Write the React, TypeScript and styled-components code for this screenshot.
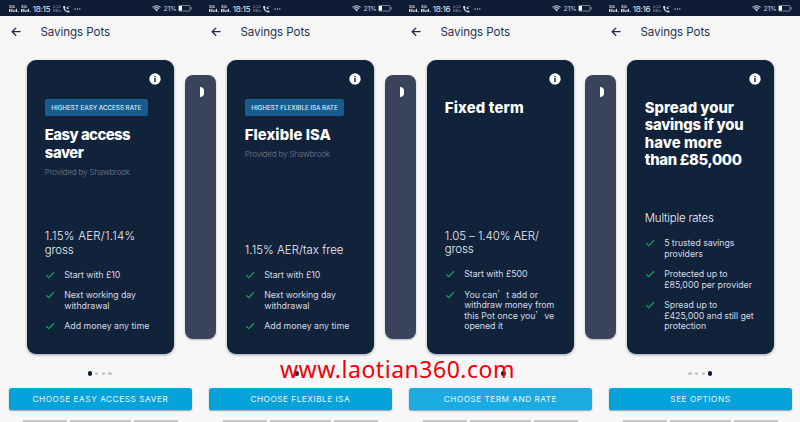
import React from "react";
import styled, { createGlobalStyle } from "styled-components";

const GlobalStyle = createGlobalStyle`
  * { box-sizing: border-box; }
  html, body { margin: 0; padding: 0; overflow: hidden; background: #f7f7f7; }
  body { font-family: Inter, "Liberation Sans", sans-serif; }
`;

const Board = styled.main`
  position: relative;
  display: grid;
  grid-template-columns: repeat(4, 200px);
  width: 800px;
  height: 422px;
  overflow: hidden;
  background: #f7f7f7;
`;

const Phone = styled.section`
  display: flex;
  flex-direction: column;
  width: 200px;
  height: 422px;
  overflow: hidden;
`;

const StatusBar = styled.header`
  display: flex;
  align-items: center;
  flex: none;
  height: 16px;
  padding: 1px 8px 0 9px;
  background: #0e1b35;
  color: #e4e7ee;
`;

const Signal = styled.span`
  display: flex;
  width: 12px;
  margin-right: -0.2px;
`;

const Clock = styled.span`
  width: 19px;
  font-size: 8.2px;
  letter-spacing: -0.3px;
  line-height: 10px;
  white-space: nowrap;
`;

const NetSpeed = styled.span`
  display: flex;
  width: 10px;
  margin-left: 1px;
`;

const StatusIcon = styled.span<{ $gap: number }>`
  display: flex;
  margin-left: ${(p) => p.$gap}px;
`;

const Battery = styled.span`
  margin-left: 3px;
  width: 13px;
  font-size: 6.8px;
  letter-spacing: -0.2px;
  line-height: 10px;
  color: #c9cedb;
`;

const Spacer = styled.span`
  flex: 1;
`;

const TitleBar = styled.div`
  display: flex;
  align-items: center;
  flex: none;
  height: 32px;
  padding-left: 11px;
`;

const ScreenTitle = styled.h1`
  margin: 0 0 0 19.5px;
  font-size: 11.6px;
  font-weight: 400;
  letter-spacing: -0.08px;
  line-height: 16px;
  color: #26314f;
  white-space: nowrap;
`;

const Carousel = styled.div`
  display: grid;
  grid-template-columns: 15.5px 146.8px 14.5px;
  column-gap: 11.5px;
  flex: none;
  height: 293.2px;
  margin-top: 12.4px;
`;

const Peek = styled.div<{ $side: "left" | "right"; $empty?: boolean }>`
  height: 264px;
  margin-top: 15px;
  padding-top: 11.3px;
  overflow: hidden;
  border-radius: ${(p) => (p.$side === "left" ? "0 8px 8px 0" : "8px 0 0 8px")};
  background: ${(p) => (p.$empty ? "transparent" : "#39435b")};
  box-shadow: ${(p) => (p.$empty ? "none" : "0 1px 2px rgba(20, 30, 50, 0.3)")};
`;

const HalfInfo = styled.span`
  display: block;
  width: 4px;
  height: 10px;
  border-radius: 0 5px 5px 0;
  background: #fff;
`;

const Card = styled.article`
  display: flex;
  flex-direction: column;
  padding: 12.4px 12.5px 21.5px 17.8px;
  border-radius: 9px;
  background: #11223b;
  box-shadow: 0 1px 3px rgba(10, 20, 40, 0.4);
`;

const InfoRow = styled.div`
  display: flex;
  justify-content: flex-end;
  height: 26px;
`;

const Badge = styled.span<{ $width: number; $tracking: number }>`
  display: flex;
  align-items: center;
  width: ${(p) => p.$width}px;
  height: 17.6px;
  margin-bottom: 9.6px;
  padding-left: 6.5px;
  border-radius: 2px;
  background: #185d90;
  color: #d9e8f3;
  font-size: 6.3px;
  font-weight: 500;
  letter-spacing: ${(p) => p.$tracking}px;
  white-space: nowrap;
`;

const ProductName = styled.h2`
  margin: 1.2px 0 0;
  font-size: 14.8px;
  font-weight: 800;
  line-height: 17.4px;
  color: #fff;
`;

const Line = styled.span<{ $tracking?: number }>`
  display: block;
  letter-spacing: ${(p) => p.$tracking ?? 0}px;
  white-space: pre;
`;

const Provider = styled.p`
  margin: 3.6px 0 0;
  font-size: 8.2px;
  font-weight: 300;
  letter-spacing: -0.26px;
  line-height: 13px;
  color: #727b92;
`;

const Rate = styled.div`
  margin: auto 0 12.9px;
  font-size: 11.4px;
  font-weight: 300;
  line-height: 13.4px;
  color: #eef1f6;
`;

const Features = styled.ul`
  display: flex;
  flex-direction: column;
  gap: 9.9px;
  margin: 0;
  padding: 0;
  list-style: none;
`;

const Feature = styled.li`
  display: grid;
  grid-template-columns: 19.4px 1fr;
  font-size: 8.8px;
  font-weight: 400;
  line-height: 10.6px;
  color: #d5dae3;
`;

const WideMark = styled.span`
  font-family: "Noto Sans CJK SC", sans-serif;
  line-height: 1;
`;

const Dots = styled.div`
  display: flex;
  align-items: center;
  justify-content: center;
  flex: none;
  height: 6px;
  margin-top: 16.8px;
`;

const Dot = styled.span<{ $active: boolean; $faint: boolean }>`
  display: flex;
  width: 6.65px;
  justify-content: center;
  &::before {
    content: "";
    width: ${(p) => (p.$active ? 4.6 : 3.4)}px;
    height: ${(p) => (p.$active ? 4.6 : 3.4)}px;
    border-radius: 50%;
    background: ${(p) => (p.$active ? "#0c1a36" : p.$faint ? "transparent" : "#c4c6cb")};
  }
`;

const Action = styled.button<{ $pressed?: boolean; $tracking: number }>`
  flex: none;
  width: 182.4px;
  height: 22.5px;
  margin: 11.3px 0 0 9.2px;
  padding: 0;
  border: 0;
  border-radius: 2.5px;
  background: ${(p) => (p.$pressed ? "#1cabe0" : "#06a3db")};
  box-shadow: 0 1px 1.5px rgba(30, 50, 70, 0.45);
  color: #e9f7fd;
  font-family: Inter, sans-serif;
  font-size: 8.2px;
  font-weight: 400;
  letter-spacing: ${(p) => p.$tracking}px;
  line-height: 22.5px;
  text-align: center;
  white-space: nowrap;
`;

const KeyRow = styled.div`
  display: flex;
  gap: 3px;
  margin-top: 10.2px;
  padding: 0 22px 0 23px;
`;

const KeyEdge = styled.span<{ $grow: number }>`
  flex: ${(p) => p.$grow};
  height: 2px;
  background: #c6c6c6;
`;

const Watermark = styled.div`
  position: absolute;
  left: 280px;
  top: 353px;
  font-family: "Noto Sans", sans-serif;
  font-size: 23px;
  letter-spacing: 0.52px;
  line-height: 32px;
  color: #f00008;
  white-space: nowrap;
`;

const SignalIcon = ({ label }: { label: string }) => (
  <svg width="12" height="9" viewBox="0 0 12 9" fill="#d5d9e3">
    <text x="0" y="4" fontSize="4.4" fontWeight="700" fontFamily="Liberation Sans">{label}</text>
    <path d="M0 5h1.5v3H0zM2.3 4.8h1.2V8H2.3zM4 6.4h1V8H4zM5.5 5.6h1V8h-1zM7 4.8h1V8H7zM8.7 7h.7v1h-.7z" />
  </svg>
);

const CheckIcon = () => (
  <svg width="10" height="10" viewBox="0 0 10 10" fill="none" stroke="#12a05b" strokeWidth="1.3">
    <path d="M1.3 5.3 3.7 7.6 9 2.3" />
  </svg>
);

const InfoIcon = () => (
  <svg width="12" height="12" viewBox="0 0 12 12">
    <circle cx="6" cy="6" r="5.7" fill="#fff" />
    <path d="M5.3 2.9h1.4v1.3H5.3zM5.3 5.1h1.4v4H5.3z" fill="#11223b" />
  </svg>
);

const BackIcon = () => (
  <svg width="10" height="10" viewBox="0 0 10 10" fill="none" stroke="#1b2747" strokeWidth="1.25">
    <path d="M9.6 4.7H1.3M5.2.6 1.1 4.7l4.1 4.1" />
  </svg>
);

type TextLine = { text: React.ReactNode; tracking?: number };

type Product = {
  time: string;
  badge?: { text: string; width: number; tracking: number };
  name: TextLine[];
  provider?: string;
  rate: TextLine[];
  features: TextLine[][];
  action: { text: string; tracking: number; pressed?: boolean };
  faintDots?: boolean;
};

const accessFeatures: TextLine[][] = [
  [{ text: "Start with £10", tracking: -0.04 }],
  [{ text: "Next working day", tracking: -0.07 }, { text: "withdrawal" }],
  [{ text: "Add money any time" }],
];

const products: Product[] = [
  {
    time: "18:15",
    badge: { text: "HIGHEST EASY ACCESS RATE", width: 103, tracking: -0.03 },
    name: [{ text: "Easy access", tracking: -0.5 }, { text: "saver", tracking: -0.4 }],
    provider: "Provided by Shawbrook",
    rate: [{ text: "1.15% AER/1.14%", tracking: 0.27 }, { text: "gross", tracking: -0.1 }],
    features: accessFeatures,
    action: { text: "CHOOSE EASY ACCESS SAVER", tracking: 0.57 },
  },
  {
    time: "18:15",
    badge: { text: "HIGHEST FLEXIBLE ISA RATE", width: 99.5, tracking: -0.05 },
    name: [{ text: "Flexible ISA", tracking: 0.08 }],
    provider: "Provided by Shawbrook",
    rate: [{ text: "1.15% AER/tax free", tracking: 0.07 }],
    features: accessFeatures,
    action: { text: "CHOOSE FLEXIBLE ISA", tracking: 0.54 },
    faintDots: true,
  },
  {
    time: "18:16",
    name: [{ text: "Fixed term", tracking: 0.18 }],
    rate: [{ text: "1.05 – 1.40% AER/", tracking: -0.03 }, { text: "gross", tracking: -0.1 }],
    features: [
      [{ text: "Start with £500", tracking: -0.04 }],
      [
        { text: <>You can<WideMark>’</WideMark>t add or</>, tracking: -0.04 },
        { text: "withdraw money from", tracking: -0.03 },
        { text: <>this Pot once you<WideMark>’</WideMark>ve</>, tracking: -0.04 },
        { text: "opened it", tracking: -0.04 },
      ],
    ],
    action: { text: "CHOOSE TERM AND RATE", tracking: 0.52, pressed: true },
    faintDots: true,
  },
  {
    time: "18:16",
    name: [
      { text: "Spread your", tracking: 0.02 },
      { text: "savings if you", tracking: -0.23 },
      { text: "have more", tracking: 0.08 },
      { text: "than £85,000", tracking: -0.32 },
    ],
    rate: [{ text: "Multiple rates", tracking: -0.18 }],
    features: [
      [{ text: "5 trusted savings", tracking: -0.07 }, { text: "providers", tracking: -0.06 }],
      [{ text: "Protected up to", tracking: -0.04 }, { text: "£85,000 per provider", tracking: -0.02 }],
      [
        { text: "Spread up to", tracking: -0.02 },
        { text: "£425,000 and still get", tracking: -0.06 },
        { text: "protection", tracking: -0.04 },
      ],
    ],
    action: { text: "SEE OPTIONS", tracking: 0.55 },
  },
];

const Lines = ({ lines }: { lines: TextLine[] }) => (
  <>
    {lines.map((l, i) => (
      <Line key={i} $tracking={l.tracking}>{l.text}</Line>
    ))}
  </>
);

const Status = ({ time }: { time: string }) => (
  <StatusBar>
    <Signal><SignalIcon label="5G" /></Signal>
    <Signal><SignalIcon label="3G" /></Signal>
    <Clock>{time}</Clock>
    <NetSpeed>
      <svg width="9" height="8" viewBox="0 0 9 8" fill="#9ca4b6" fontFamily="Liberation Sans" fontSize="3.9">
        <text x="0" y="3.3">0.10</text>
        <text x="0" y="7.4">KB/s</text>
      </svg>
    </NetSpeed>
    <StatusIcon $gap={0.5}>
      <svg width="7" height="8" viewBox="0 0 7 8" fill="none" stroke="#dfe3ec" strokeWidth="1.1">
        <path d="M.8 1C.8 4.7 2.8 6.9 6.2 7" />
        <path d="M.9 1.1 1.7 3M6.2 6.9 4.7 5.9" strokeWidth="1.5" />
        <path d="M6.2 1.2 4 3.5M4 2v1.6h1.7" strokeWidth=".8" />
      </svg>
    </StatusIcon>
    <StatusIcon $gap={4}>
      <svg width="7" height="2" viewBox="0 0 7 2" fill="#c9cedb">
        <circle cx="1" cy="1" r=".7" /><circle cx="3.4" cy="1" r=".7" /><circle cx="5.8" cy="1" r=".7" />
      </svg>
    </StatusIcon>
    <Spacer />
    <StatusIcon $gap={0}>
      <svg width="9" height="7" viewBox="0 0 9 7" fill="none" stroke="#b4bbca" strokeWidth="1.2">
        <path d="M.5 2.4C2.8.3 6.2.3 8.5 2.4M1.9 3.8c1.5-1.3 3.7-1.3 5.2 0" />
        <path d="M2.9 4.7 4.5 6.6l1.6-1.9c-.9-.8-2.3-.8-3.2 0z" fill="#c2c8d5" stroke="none" />
      </svg>
    </StatusIcon>
    <Battery>21%</Battery>
    <StatusIcon $gap={1.5}>
      <svg width="14" height="7" viewBox="0 0 14 7">
        <rect x=".5" y=".5" width="11.6" height="5.6" rx="1" fill="none" stroke="#8f98ab" strokeWidth=".8" />
        <rect x="1" y="1" width="3" height="4.6" fill="#fff" />
        <rect x="12.6" y="2.2" width="1" height="2.4" fill="#8f98ab" />
      </svg>
    </StatusIcon>
  </StatusBar>
);

export default function App() {
  return (
    <>
      <GlobalStyle />
      <Board>
        {products.map((p, index) => (
          <Phone key={index}>
            <Status time={p.time} />
            <TitleBar>
              <BackIcon />
              <ScreenTitle>Savings Pots</ScreenTitle>
            </TitleBar>
            <Carousel>
              <Peek $side="left" $empty={index === 0}>
                {index > 0 && <HalfInfo />}
              </Peek>
              <Card>
                <InfoRow><InfoIcon /></InfoRow>
                {p.badge && (
                  <Badge $width={p.badge.width} $tracking={p.badge.tracking}>{p.badge.text}</Badge>
                )}
                <ProductName><Lines lines={p.name} /></ProductName>
                {p.provider && <Provider>{p.provider}</Provider>}
                <Rate><Lines lines={p.rate} /></Rate>
                <Features>
                  {p.features.map((f, i) => (
                    <Feature key={i}>
                      <CheckIcon />
                      <div><Lines lines={f} /></div>
                    </Feature>
                  ))}
                </Features>
              </Card>
              <Peek $side="right" $empty={index === 3} />
            </Carousel>
            <Dots>
              {products.map((_, i) => (
                <Dot key={i} $active={i === index} $faint={!!p.faintDots} />
              ))}
            </Dots>
            <Action $pressed={p.action.pressed} $tracking={p.action.tracking}>{p.action.text}</Action>
            <KeyRow>
              <KeyEdge $grow={44} />
              <KeyEdge $grow={60} />
              <KeyEdge $grow={44} />
            </KeyRow>
          </Phone>
        ))}
        <Watermark>www.laotian360.com</Watermark>
      </Board>
    </>
  );
}
